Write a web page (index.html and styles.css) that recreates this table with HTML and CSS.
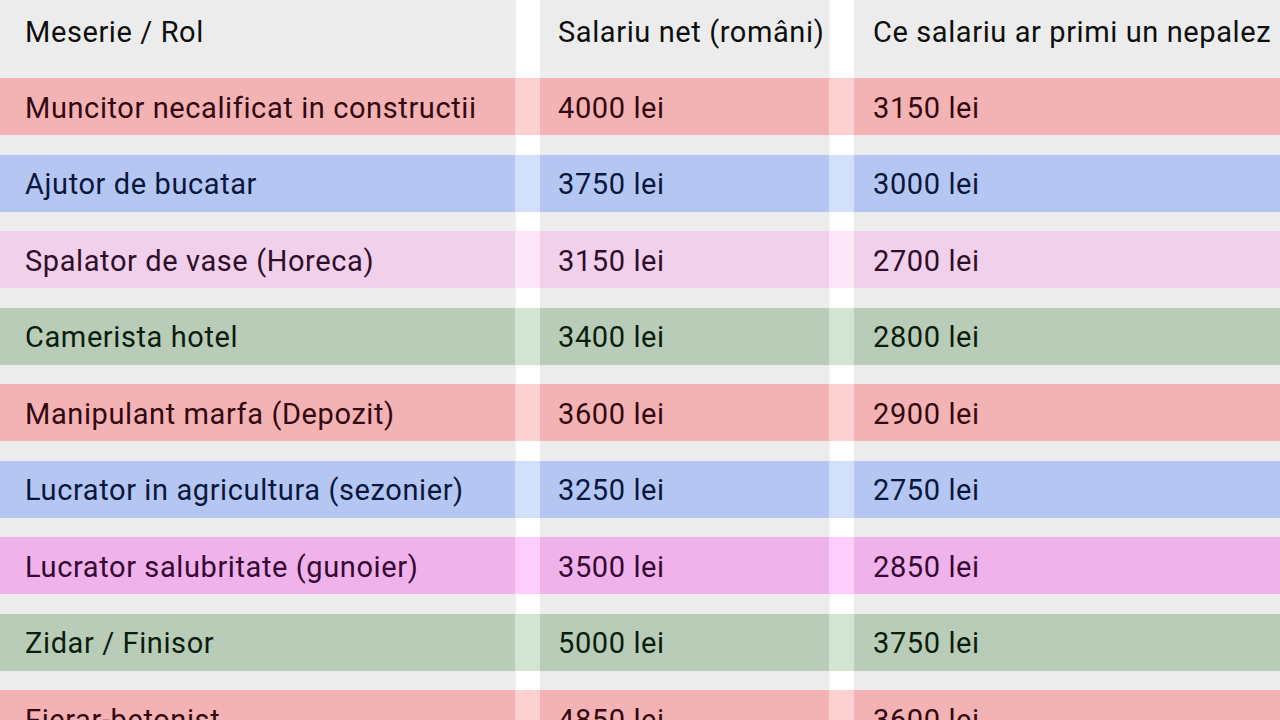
FILE: index.html
```html
<!DOCTYPE html>
<html lang="ro">
<head>
<meta charset="utf-8">
<title>Salarii</title>
<link rel="stylesheet" href="styles.css">
</head>
<body>
<div class="sheet">
  <div class="row head">
    <div class="cell c1">Meserie / Rol</div>
    <div class="sep"></div>
    <div class="cell c2">Salariu net (români)</div>
    <div class="sep"></div>
    <div class="cell c3">Ce salariu ar primi un nepalez</div>
  </div>
  <div class="row band red">
    <div class="cell c1">Muncitor necalificat in constructii</div>
    <div class="sep"></div>
    <div class="cell c2">4000 lei</div>
    <div class="sep"></div>
    <div class="cell c3">3150 lei</div>
  </div>
  <div class="row band blue">
    <div class="cell c1">Ajutor de bucatar</div>
    <div class="sep"></div>
    <div class="cell c2">3750 lei</div>
    <div class="sep"></div>
    <div class="cell c3">3000 lei</div>
  </div>
  <div class="row band lilac">
    <div class="cell c1">Spalator de vase (Horeca)</div>
    <div class="sep"></div>
    <div class="cell c2">3150 lei</div>
    <div class="sep"></div>
    <div class="cell c3">2700 lei</div>
  </div>
  <div class="row band green">
    <div class="cell c1">Camerista hotel</div>
    <div class="sep"></div>
    <div class="cell c2">3400 lei</div>
    <div class="sep"></div>
    <div class="cell c3">2800 lei</div>
  </div>
  <div class="row band red">
    <div class="cell c1">Manipulant marfa (Depozit)</div>
    <div class="sep"></div>
    <div class="cell c2">3600 lei</div>
    <div class="sep"></div>
    <div class="cell c3">2900 lei</div>
  </div>
  <div class="row band blue">
    <div class="cell c1">Lucrator in agricultura (sezonier)</div>
    <div class="sep"></div>
    <div class="cell c2">3250 lei</div>
    <div class="sep"></div>
    <div class="cell c3">2750 lei</div>
  </div>
  <div class="row band pink">
    <div class="cell c1">Lucrator salubritate (gunoier)</div>
    <div class="sep"></div>
    <div class="cell c2">3500 lei</div>
    <div class="sep"></div>
    <div class="cell c3">2850 lei</div>
  </div>
  <div class="row band green">
    <div class="cell c1">Zidar / Finisor</div>
    <div class="sep"></div>
    <div class="cell c2">5000 lei</div>
    <div class="sep"></div>
    <div class="cell c3">3750 lei</div>
  </div>
  <div class="row band red">
    <div class="cell c1">Fierar-betonist</div>
    <div class="sep"></div>
    <div class="cell c2">4850 lei</div>
    <div class="sep"></div>
    <div class="cell c3">3600 lei</div>
  </div>
</div>
</body>
</html>
```
FILE: styles.css
```css
html, body {
  margin: 0;
  padding: 0;
}
body {
  width: 1280px;
  height: 720px;
  overflow: hidden;
  background-color: #ececec;
  background-image: linear-gradient(90deg,
    transparent 0, transparent 515px,
    #f6f6f6 515px, #f6f6f6 517px,
    #ffffff 517px, #ffffff 540px,
    transparent 540px, transparent 829px,
    #f6f6f6 829px, #f6f6f6 831px,
    #ffffff 831px, #ffffff 854px,
    transparent 854px);
  font-family: Roboto, "Liberation Sans", Arial, sans-serif;
  font-size: 29px;
  letter-spacing: 0.6px;
  color: #121212;
}
.sheet {
  display: flex;
  flex-direction: column;
}
.row {
  display: grid;
  grid-template-columns: 515px 25px 289px 25px 1fr;
}
.cell {
  white-space: nowrap;
  line-height: 34px;
}
.c1 { padding-left: 25px; }
.c2 { padding-left: 18px; }
.c3 { padding-left: 19px; }

.head {
  height: 78px;
}
.head .cell {
  padding-top: 15px;
  color: #0e0e0e;
}

.band {
  height: 57px;
  margin-bottom: 19.5px;
  align-items: center;
  background: var(--bg);
  color: var(--fg);
}
.band .cell {
  padding-top: 2px;
}
.band .sep {
  align-self: stretch;
  background: var(--sep);
}
.red   { --bg: #f3b3b5; --sep: #fdd0d1; --fg: #330810; }
.blue  { --bg: #b4c6f1; --sep: #d2e0fc; --fg: #0a163c; }
.lilac { --bg: #f0d0ea; --sep: #fce6f8; --fg: #2e0e28; }
.green { --bg: #b8ccb7; --sep: #d4e4d3; --fg: #0c1c0d; }
.pink  { --bg: #f0b2ea; --sep: #fdcefc; --fg: #340832; }
```
